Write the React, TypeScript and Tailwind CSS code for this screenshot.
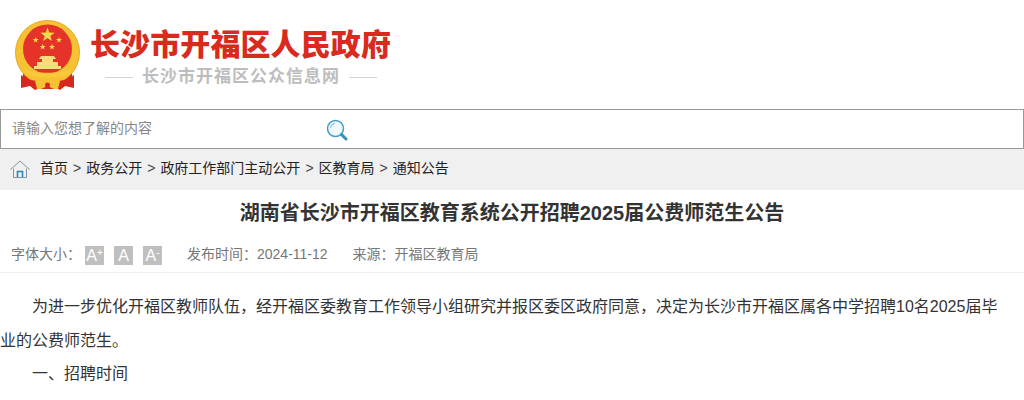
import React from 'react';

const font = "font-['Liberation_Sans','Noto_Sans_CJK_SC',sans-serif]";

const STAR = '0,-10 2.350,-3.240 9.510,-3.090 3.800,1.240 5.880,8.090 0,4 -5.880,8.090 -3.800,1.240 -9.510,-3.090 -2.350,-3.240';

const Emblem = () => (
  <svg width="68" height="72" viewBox="0 0 68 72">
    <path d="M9 54 L7 68 L16 66 L21 70 L28 67 L34 69 L40 67 L46 70 L51 66 L60 68 L58 54 Z" fill="#d6281f" />
    <circle cx="33.500" cy="32.500" r="32" fill="#f4c232" stroke="#eaa91f" strokeWidth="1" />
    <circle cx="33.500" cy="29" r="24.500" fill="#e5332a" />
    <polygon points={STAR} fill="#f9d849" transform="translate(33.500 15) scale(0.750)" />
    <polygon points={STAR} fill="#f9d849" transform="translate(21.700 20) scale(0.320)" />
    <polygon points={STAR} fill="#f9d849" transform="translate(45 20) scale(0.320)" />
    <polygon points={STAR} fill="#f9d849" transform="translate(28.700 27) scale(0.320)" />
    <polygon points={STAR} fill="#f9d849" transform="translate(38 27) scale(0.320)" />
    <path d="M27 36 H40 L42 39 H39 V42 H44 V46 H47 V49 H20 V46 H23 V42 H28 V39 H25 Z" fill="#f8dc7a" />
    <path d="M11 49 C17 54 50 54 56 49 L56 53 C50 59 17 59 11 53 Z" fill="#f9c93b" />
    <path d="M7 55 C14 62 24 60 33.500 63 C43 60 53 62 60 55 L60 67 L52 65 L46 69 L21 69 L15 65 L7 67 Z" fill="#d6281f" />
    <path d="M21 61 C26 57 30 59 33.500 62 C37 59 41 57 46 61 L44 69 H40 L33.500 66 L27 69 H23 Z" fill="#f4c232" />
    <circle cx="33.500" cy="65" r="2.500" fill="#d6281f" />
  </svg>
);

const Crumb = ({ children }: { children: React.ReactNode }) => <a className="text-[#222]">{children}</a>;

const Sep = () => <span className="mx-[5px] text-[#444]">&gt;</span>;

const FontBtn = ({ mark }: { mark?: string }) => (
  <span className="w-[19px] h-[19px] bg-[#bfbfbf] text-white text-[16px] leading-[20px] text-center whitespace-nowrap">
    A{mark && <span className="text-[10px] leading-none align-[5px]">{mark}</span>}
  </span>
);

export default function App() {
  return (
    <div className={`${font} bg-white text-[#333] h-[400px] overflow-hidden`}>
      <header className="h-[109px] flex pl-[14px] pt-[20px]">
        <Emblem />
        <div className="ml-[9px] flex flex-col items-start">
          <h1 className="text-[30px] leading-[38px] mt-[6px] -ml-[1px] font-black text-[#d92a1e] tracking-[0.1px]">长沙市开福区人民政府</h1>
          <div className="flex items-center mt-[2px] ml-[14px] text-[#bdbdbd]">
            <span className="w-[28px] h-px bg-[#d5d5d5]"></span>
            <span className="mx-[9px] text-[17px] leading-[22px] font-bold tracking-[1px]">长沙市开福区公众信息网</span>
            <span className="w-[28px] h-px bg-[#d5d5d5]"></span>
          </div>
        </div>
      </header>

      <div className="h-[40px] border border-[#999] flex items-center pl-[11px]">
        <span className="w-[314px] text-[14px] text-[#888] pb-[2px]">请输入您想了解的内容</span>
        <svg width="22" height="22" viewBox="0 0 22 22" className="mt-[2px]">
          <circle cx="9.500" cy="9.500" r="8" fill="#f2f9fc" stroke="#3f9cc8" strokeWidth="1.500" />
          <path d="M4.500 9 C4.800 6.500 6.500 4.800 9 4.500" fill="none" stroke="#8cc6e0" strokeWidth="1.200" />
          <path d="M15.500 15.500 L20 20" stroke="#2f8fbe" strokeWidth="3" strokeLinecap="round" />
        </svg>
      </div>

      <nav className="h-[41px] bg-[#f1f0f1] flex items-center pl-[10px] pb-[2px] text-[14px] text-[#222]">
        <svg width="20" height="19" viewBox="0 0 20 19" className="mr-[10px] mt-[2px]" fill="none">
          <path d="M0.500 9.500 L10 1 L19.500 9.500" stroke="#7f93a3" strokeWidth="1" />
          <path d="M3.500 8.500 V17.500 H16.500 V8.500" stroke="#7f93a3" strokeWidth="1" />
          <path d="M7.500 17 V11.500 H12.500 V17" stroke="#2f86b8" strokeWidth="1.600" />
        </svg>
        <Crumb>首页</Crumb>
        <Sep />
        <Crumb>政务公开</Crumb>
        <Sep />
        <Crumb>政府工作部门主动公开</Crumb>
        <Sep />
        <Crumb>区教育局</Crumb>
        <Sep />
        <Crumb>通知公告</Crumb>
      </nav>

      <h2 className="mt-[9px] text-center text-[20px] leading-[28px] font-bold text-[#333]">湖南省长沙市开福区教育系统公开招聘2025届公费师范生公告</h2>

      <div className="mt-[13px] h-[33px] pb-[4px] border-b border-[#eee] flex items-center pl-[11px] text-[14px] text-[#777]">
        <span>字体大小：</span>
        <div className="flex gap-[10px] ml-[4px] mr-[25px] mt-[3px]">
          <FontBtn mark="+" />
          <FontBtn />
          <FontBtn mark="-" />
        </div>
        <span>发布时间：2024-11-12</span>
        <span className="ml-[25px]">来源：开福区教育局</span>
      </div>

      <article className="mt-[17px] pr-[20px] text-[16px] leading-[33.500px] text-[#333]">
        <p className="indent-[32px]">为进一步优化开福区教师队伍，经开福区委教育工作领导小组研究并报区委区政府同意，决定为长沙市开福区属各中学招聘10名2025届毕业的公费师范生。</p>
        <p className="indent-[32px]">一、招聘时间</p>
        <p className="indent-[32px]">（一）</p>
      </article>
    </div>
  );
}
